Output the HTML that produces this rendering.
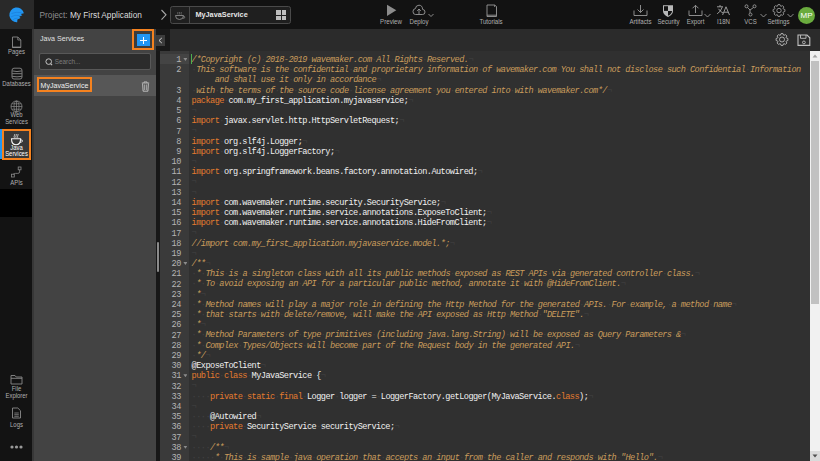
<!DOCTYPE html>
<html><head><meta charset="utf-8">
<style>
*{box-sizing:border-box;margin:0;padding:0}
html,body{width:820px;height:461px;overflow:hidden;background:#303030;font-family:"Liberation Sans",sans-serif}
.a{position:absolute}
#top{left:0;top:0;width:820px;height:29px;background:#121212}
#logo{left:0;top:0;width:34px;height:29px;background:#292929}
#nav{left:0;top:29px;width:32px;height:432px;background:#131313}
#navblack{left:0;top:189px;width:32px;height:28px;background:#000}
#panel{left:32px;top:29px;width:124px;height:432px;background:#434343;border-left:2px solid #373737}
#strip{left:156px;top:29px;width:4px;height:432px;background:#171717}
#strip2{left:156px;top:29px;width:14.4px;height:22px;background:#191919}
#etool{left:170.4px;top:29px;width:650px;height:22px;background:#2b2b2b}
#editor{left:160px;top:51px;width:650px;height:410px;background:#303030;overflow:hidden}
#gutter{left:0;top:0;width:29.4px;height:410px;background:#3a3a3a}
#sb{left:810px;top:51px;width:10px;height:410px;background:#f1f1f1}
.lbl{color:#b0b0b0;font-size:6.3px;transform:scaleX(0.94);white-space:nowrap;text-align:center}
.code{font-family:"Liberation Mono",monospace;font-size:8.6px;letter-spacing:-0.546px;line-height:10.2px;white-space:pre;color:#f0f0f0}
.c{color:#c99c5c;font-style:italic}
.k{color:#e37b2f}
.ln{position:absolute;left:0;margin-top:0.4px;width:20.8px;text-align:right;font-family:"Liberation Mono",monospace;font-size:8.6px;letter-spacing:-0.546px;line-height:10.2px;color:#b4b4b4}
.fold{position:absolute;left:23.4px;width:4px;height:3px;background:#8c8c8c;clip-path:polygon(0 0,100% 0,50% 100%)}
.i{color:#424242;font-style:normal}

</style></head><body>
<div id="top" class="a"></div>
<div id="logo" class="a">
<svg class="a" style="left:5.4px;top:3.6px" width="24" height="24" viewBox="0 0 24 24">
<path d="M18.9,9.3 A7.35,7.35 0 1 0 12.2,18.2 L12.4,15.4 L15.6,13.9 L14.2,12.8 L17.3,11.2 L15.8,9.9 Z" fill="#2196f3"/>
<path d="M6.5,9.5 Q11,7.6 16.5,8.6" stroke="#1976d2" stroke-width="0.7" fill="none" opacity="0.8"/>
<path d="M5.8,13 Q9.5,10.5 14.5,11.5" stroke="#1976d2" stroke-width="0.7" fill="none" opacity="0.8"/>
<path d="M7.5,16.5 Q9.5,13.8 12.8,14.2" stroke="#1976d2" stroke-width="0.7" fill="none" opacity="0.8"/>
</svg>
</div>
<div class="a" style="left:39.5px;top:9.6px;font-size:8.3px;line-height:10px;white-space:nowrap;color:#8f8f8f">Project: <span style="color:#dcdcdc">My First Application</span></div>
<svg class="a" style="left:160px;top:9px" width="8" height="12" viewBox="0 0 8 12"><path d="M1.5,1 L6,5.8 L1.5,10.6" stroke="#a8a8a8" stroke-width="1.1" fill="none"/></svg>
<div class="a" style="left:170px;top:6px;width:121px;height:18px;border:1px solid #4a4a4a;border-radius:2.5px;background:#1f1f1f"></div>
<div class="a" style="left:189px;top:7px;width:1px;height:16px;background:#4a4a4a"></div>
<svg class="a" style="left:174px;top:8px" width="12" height="14" viewBox="0 0 12 14">
<path d="M1.5,7.5 H9.5 Q9.5,11.5 5.5,11.5 Q1.5,11.5 1.5,7.5 Z" stroke="#8a8a8a" stroke-width="0.9" fill="none"/>
<path d="M9.4,8.3 Q11,8.3 10.8,9.5 Q10.4,10.4 9,10.2" stroke="#8a8a8a" stroke-width="0.8" fill="none"/>
<path d="M4,6.5 Q3.3,5.2 4,4 M5.7,6.5 Q5,5.2 5.7,4 M7.4,6.5 Q6.7,5.2 7.4,4" stroke="#8a8a8a" stroke-width="0.6" fill="none"/>
</svg>
<div class="a" style="left:195.4px;top:10px;font-size:7.3px;line-height:9px;font-weight:bold;color:#e6e6e6;white-space:nowrap">MyJavaService</div>
<div class="a" style="left:276px;top:10px;width:4.5px;height:4.5px;background:#bdbdbd"></div>
<div class="a" style="left:281.5px;top:10px;width:4.5px;height:4.5px;background:#bdbdbd"></div>
<div class="a" style="left:276px;top:15.5px;width:4.5px;height:4.5px;background:#bdbdbd"></div>
<div class="a" style="left:281.5px;top:15.5px;width:4.5px;height:4.5px;background:#bdbdbd"></div>

<!-- toolbar buttons -->
<svg class="a" style="left:386px;top:4px" width="11" height="13" viewBox="0 0 11 13"><path d="M1,0.7 L10.3,6.3 L1,12 Z" fill="#8c8c8c"/></svg>
<div class="a lbl" style="left:371px;top:17.8px;width:40px;font-size:6.8px;transform:scaleX(0.9)">Preview</div>
<svg class="a" style="left:412px;top:4px" width="14" height="12" viewBox="0 0 14 12"><path d="M3.5,10.5 H10.5 Q13,10.5 13,8 Q13,5.6 10.6,5.4 Q10.4,1.2 7,1.2 Q3.8,1.2 3.4,4.6 Q1,4.9 1,7.6 Q1,10.5 3.5,10.5 Z" stroke="#9a9a9a" stroke-width="0.9" fill="none"/><path d="M7,10 V5 M5.2,6.8 L7,5 L8.8,6.8" stroke="#9a9a9a" stroke-width="0.9" fill="none"/></svg>
<div class="a lbl" style="left:399px;top:17.8px;width:40px;font-size:6.8px;transform:scaleX(0.9)">Deploy</div>
<svg class="a" style="left:428px;top:13px" width="6" height="5" viewBox="0 0 6 5"><path d="M0.5,1 L3,3.5 L5.5,1" stroke="#9a9a9a" stroke-width="0.9" fill="none"/></svg>
<svg class="a" style="left:485px;top:3px" width="13" height="15" viewBox="0 0 13 15"><path d="M2,2 H9.5 L11.5,3.5 V13.5 H2 Z" stroke="#9a9a9a" stroke-width="0.9" fill="none"/><path d="M2,12.2 H11.5" stroke="#9a9a9a" stroke-width="0.9"/><path d="M9.5,2 V4" stroke="#9a9a9a" stroke-width="0.7"/></svg>
<div class="a lbl" style="left:471px;top:17.8px;width:40px;font-size:6.8px;transform:scaleX(0.9)">Tutorials</div>

<svg class="a" style="left:633px;top:4px" width="15" height="13" viewBox="0 0 15 13"><path d="M1,6.5 V11.5 H14 V6.5" stroke="#9a9a9a" stroke-width="0.9" fill="none"/><path d="M7.5,1 V8.3 M4.5,5.5 L7.5,8.5 L10.5,5.5" stroke="#9a9a9a" stroke-width="0.9" fill="none"/></svg>
<div class="a lbl" style="left:620px;top:17.8px;width:41px;font-size:6.8px;transform:scaleX(0.9)">Artifacts</div>
<svg class="a" style="left:662px;top:3.6px" width="12" height="14" viewBox="0 0 12 14"><path d="M1,1.2 H11 V7 Q11,10.6 6,13 Q1,10.6 1,7 Z" fill="#b8b8b8"/><path d="M2,2.2 H6 V6.9 H2 Z" fill="#121212"/><path d="M6,6.9 H10 Q9.8,10 6,11.8 Z" fill="#121212"/></svg>
<div class="a lbl" style="left:648px;top:17.8px;width:41px;font-size:6.8px;transform:scaleX(0.9)">Security</div>
<svg class="a" style="left:688px;top:4px" width="15" height="13" viewBox="0 0 15 13"><path d="M1,6.5 V11.5 H14 V6.5" stroke="#9a9a9a" stroke-width="0.9" fill="none"/><path d="M7.5,9 V1.3 M4.5,4.3 L7.5,1.3 L10.5,4.3" stroke="#9a9a9a" stroke-width="0.9" fill="none"/></svg>
<div class="a lbl" style="left:675px;top:17.8px;width:41px;font-size:6.8px;transform:scaleX(0.9)">Export</div>
<svg class="a" style="left:704px;top:13px" width="7" height="5" viewBox="0 0 7 5"><path d="M0.5,1 L3.5,4 L6.5,1" stroke="#9a9a9a" stroke-width="0.9" fill="none"/></svg>
<svg class="a" style="left:716px;top:4px" width="15" height="12" viewBox="0 0 15 12"><path d="M1,2.8 H7 M4,1 V2.8 M6.2,3.2 Q5,7.5 1.2,9.8 M2.5,4.8 Q4.5,8 7,9" stroke="#a8a8a8" stroke-width="0.9" fill="none"/><path d="M6.6,11 L10,2.8 L13.5,11 M8,8.2 H12.2" stroke="#a8a8a8" stroke-width="0.9" fill="none"/></svg>
<div class="a lbl" style="left:703px;top:17.8px;width:41px;font-size:6.8px;transform:scaleX(0.9)">I18N</div>
<svg class="a" style="left:744px;top:4px" width="13" height="13" viewBox="0 0 13 13"><circle cx="2.5" cy="2.3" r="1.5" stroke="#9a9a9a" stroke-width="0.9" fill="none"/><circle cx="10.5" cy="2.3" r="1.5" stroke="#9a9a9a" stroke-width="0.9" fill="none"/><circle cx="6.5" cy="10.5" r="1.5" stroke="#9a9a9a" stroke-width="0.9" fill="none"/><path d="M3.5,3.5 L6,6 L9.5,3.5 M6,6 V9" stroke="#9a9a9a" stroke-width="0.9" fill="none"/></svg>
<div class="a lbl" style="left:730px;top:17.8px;width:41px;font-size:6.8px;transform:scaleX(0.9)">VCS</div>
<svg class="a" style="left:760px;top:13px" width="7" height="5" viewBox="0 0 7 5"><path d="M0.5,1 L3.5,4 L6.5,1" stroke="#9a9a9a" stroke-width="0.9" fill="none"/></svg>
<svg class="a" style="left:772px;top:4px" width="14" height="13" viewBox="-7 -6.5 14 13"><path d="M-1.49,-4.35 L-0.99,-5.92 L0.99,-5.92 L1.49,-4.35 L2.02,-4.13 L3.49,-4.88 L4.88,-3.49 L4.13,-2.02 L4.35,-1.49 L5.92,-0.99 L5.92,0.99 L4.35,1.49 L4.13,2.02 L4.88,3.49 L3.49,4.88 L2.02,4.13 L1.49,4.35 L0.99,5.92 L-0.99,5.92 L-1.49,4.35 L-2.02,4.13 L-3.49,4.88 L-4.88,3.49 L-4.13,2.02 L-4.35,1.49 L-5.92,0.99 L-5.92,-0.99 L-4.35,-1.49 L-4.13,-2.02 L-4.88,-3.49 L-3.49,-4.88 L-2.02,-4.13 Z" stroke-linejoin="round" stroke="#9a9a9a" stroke-width="0.9" fill="none"/><circle cx="0" cy="0" r="2.2" stroke="#9a9a9a" stroke-width="0.9" fill="none"/></svg>
<div class="a lbl" style="left:758px;top:17.8px;width:41px;font-size:6.8px;transform:scaleX(0.9)">Settings</div>
<svg class="a" style="left:787px;top:13px" width="7" height="5" viewBox="0 0 7 5"><path d="M0.5,1 L3.5,4 L6.5,1" stroke="#9a9a9a" stroke-width="0.9" fill="none"/></svg>
<div class="a" style="left:798px;top:6.5px;width:17px;height:17px;border-radius:50%;background:#6aab3e;color:#fff;font-size:8px;text-align:center;line-height:17px">MP</div>

<!-- left nav -->
<div id="nav" class="a"></div>
<div id="navblack" class="a"></div>
<svg class="a" style="left:11px;top:36px" width="11" height="13" viewBox="0 0 11 13"><path d="M1.5,1 H6.8 L9.8,4 V11.5 H1.5 Z" stroke="#8a8a8a" stroke-width="0.9" fill="none"/><path d="M6.8,1 V4 H9.8" stroke="#8a8a8a" stroke-width="0.8" fill="none"/><path d="M1.5,11.3 H9.8" stroke="#8a8a8a" stroke-width="1.4"/></svg>
<div class="a lbl" style="left:0;top:48.1px;width:33px">Pages</div>
<svg class="a" style="left:11px;top:67px" width="12" height="13" viewBox="0 0 12 13"><path d="M3,1.2 H9 Q11,1.2 11,3.5 V10 Q11,12 9,12 H3 Q1,12 1,10 V3.5 Q1,1.2 3,1.2 Z" stroke="#8a8a8a" stroke-width="0.9" fill="none"/><path d="M1.2,3.9 Q6,5.2 10.8,3.9 M1.2,6.7 H10.8 M1.2,9.3 Q6,10.4 10.8,9.3" stroke="#8a8a8a" stroke-width="0.9" fill="none"/></svg>
<div class="a lbl" style="left:0;top:80px;width:33px">Databases</div>
<svg class="a" style="left:10px;top:100px" width="13" height="13" viewBox="0 0 13 13"><circle cx="6.5" cy="6.5" r="5.5" stroke="#8a8a8a" stroke-width="0.8" fill="none"/><ellipse cx="6.5" cy="6.5" rx="2.5" ry="5.5" stroke="#8a8a8a" stroke-width="0.7" fill="none"/><path d="M1,6.5 H12 M1.8,3.8 H11.2 M1.8,9.2 H11.2 M6.5,1 V12" stroke="#8a8a8a" stroke-width="0.7"/></svg>
<div class="a lbl" style="left:0;top:112.4px;width:33px;line-height:6.3px">Web<br>Services</div>
<div class="a" style="left:0;top:129px;width:2px;height:30px;background:#2196f3"></div>
<div class="a" style="left:2.4px;top:128.9px;width:28.9px;height:31.6px;border:2.2px solid #f5821f;background:#383838"></div>
<svg class="a" style="left:10px;top:132.6px" width="14" height="13" viewBox="0 0 14 13"><path d="M1.5,5.8 H10.6 Q10.6,11.8 6.05,11.8 Q1.5,11.8 1.5,5.8 Z" stroke="#f4f4f4" stroke-width="1.1" fill="none"/><path d="M10.5,6.8 Q12.8,6.6 12.4,8.3 Q12,9.4 10,9.3" stroke="#f4f4f4" stroke-width="0.9" fill="none"/><path d="M4.4,4.8 Q3.8,3.6 4.4,2.6 Q5,1.6 4.4,1 M6.1,4.8 Q5.5,3.6 6.1,2.6 Q6.7,1.6 6.1,1 M7.8,4.8 Q7.2,3.6 7.8,2.6 Q8.4,1.6 7.8,1" stroke="#f4f4f4" stroke-width="0.75" fill="none"/></svg>
<div class="a lbl" style="left:0;top:145.2px;width:33px;line-height:5.9px;color:#ffffff">Java<br>Services</div>
<svg class="a" style="left:10px;top:166px" width="13" height="12" viewBox="0 0 13 12"><rect x="8.2" y="1" width="2.8" height="2.8" stroke="#8a8a8a" stroke-width="0.8" fill="none"/><rect x="1.5" y="8.2" width="2.8" height="2.8" stroke="#8a8a8a" stroke-width="0.8" fill="none"/><path d="M9.6,3.8 V6 Q9.6,7.4 7.8,7.4 H5.5 Q4.2,7.4 3.2,8.2" stroke="#8a8a8a" stroke-width="0.8" fill="none"/></svg>
<div class="a lbl" style="left:0;top:178.9px;width:33px">APIs</div>
<svg class="a" style="left:10px;top:374px" width="13" height="11" viewBox="0 0 13 11"><path d="M1,1.5 H5 L6.2,3 H12 V10 H1 Z M1,4.3 H12" stroke="#8a8a8a" stroke-width="0.9" fill="none"/></svg>
<div class="a lbl" style="left:0;top:386.3px;width:33px;line-height:6.4px">File<br>Explorer</div>
<svg class="a" style="left:11px;top:407px" width="11" height="12" viewBox="0 0 11 12"><path d="M1.5,1 H6.8 L9.5,3.7 V11 H1.5 Z" stroke="#8a8a8a" stroke-width="0.9" fill="none"/><path d="M3.3,6 H7.8 M3.3,7.7 H7.8 M3.3,9.3 H7.8" stroke="#8a8a8a" stroke-width="0.8"/></svg>
<div class="a lbl" style="left:0;top:420.8px;width:33px">Logs</div>
<svg class="a" style="left:10px;top:444px" width="13" height="6" viewBox="0 0 13 6"><circle cx="2" cy="3" r="1.6" fill="#9a9a9a"/><circle cx="6.5" cy="3" r="1.6" fill="#9a9a9a"/><circle cx="11" cy="3" r="1.6" fill="#9a9a9a"/></svg>

<!-- panel -->
<div id="panel" class="a"></div>
<div class="a" style="left:40.1px;top:34.1px;font-size:7.8px;line-height:9px;color:#e0e0e0;white-space:nowrap;transform:scaleX(0.91);transform-origin:0 0">Java Services</div>
<div class="a" style="left:132px;top:29px;width:22px;height:21px;border:2px solid #f5821f;background:#3c3c3c"></div>
<div class="a" style="left:137px;top:34px;width:13px;height:12px;background:#2196f3"></div>
<div class="a" style="left:140px;top:39.5px;width:7px;height:1.2px;background:#fff"></div>
<div class="a" style="left:142.9px;top:36.6px;width:1.2px;height:7px;background:#fff"></div>
<div class="a" style="left:39px;top:53px;width:112.4px;height:17px;border:1px solid #585858;border-radius:2px;background:#2c2c2c"></div>
<svg class="a" style="left:44.6px;top:57.6px" width="8" height="8" viewBox="0 0 8 8"><circle cx="3.7" cy="3.6" r="2.8" stroke="#c4c4c4" stroke-width="1" fill="none"/><path d="M5.6,5.6 L7.1,7.1" stroke="#c4c4c4" stroke-width="1.1"/></svg>
<div class="a" style="left:54.7px;top:57.7px;font-size:6.4px;line-height:8px;color:#7c7c7c;white-space:nowrap">Search...</div>
<div class="a" style="left:34px;top:75px;width:122px;height:21px;background:#575757"></div>
<div class="a" style="left:36.5px;top:77px;width:55.5px;height:15.2px;border:2px solid #f5821f;background:#4a4a4a"></div>
<div class="a" style="left:40.6px;top:80.5px;font-size:7.05px;line-height:9px;color:#f0f0f0;white-space:nowrap">MyJavaService</div>
<svg class="a" style="left:141px;top:81px" width="9" height="11" viewBox="0 0 9 11"><path d="M0.8,2 H8.2 M3,2 V0.9 H6 V2" stroke="#c8c8c8" stroke-width="0.8" fill="none"/><path d="M1.6,2.5 L2.1,10.2 H6.9 L7.4,2.5" stroke="#c8c8c8" stroke-width="0.9" fill="none"/><path d="M3.6,3.5 V9 M5.4,3.5 V9" stroke="#c8c8c8" stroke-width="0.7"/></svg>

<div id="strip" class="a"></div>
<div class="a" style="left:156.5px;top:242px;width:2.5px;height:30px;background:#8a8a8a;border-radius:1px"></div>
<div id="etool" class="a"></div>
<div id="strip2" class="a"></div>
<div class="a" style="left:156px;top:35px;width:9px;height:10.6px;background:#3d3d3d"></div>
<svg class="a" style="left:157px;top:37px" width="7" height="7" viewBox="0 0 7 7"><path d="M4.8,1 L2,3.5 L4.8,6" stroke="#d8d8d8" stroke-width="1" fill="none"/></svg>
<svg class="a" style="left:774.8px;top:32.6px" width="14" height="13" viewBox="-7 -6.5 14 13"><path d="M-1.49,-4.35 L-0.99,-5.92 L0.99,-5.92 L1.49,-4.35 L2.02,-4.13 L3.49,-4.88 L4.88,-3.49 L4.13,-2.02 L4.35,-1.49 L5.92,-0.99 L5.92,0.99 L4.35,1.49 L4.13,2.02 L4.88,3.49 L3.49,4.88 L2.02,4.13 L1.49,4.35 L0.99,5.92 L-0.99,5.92 L-1.49,4.35 L-2.02,4.13 L-3.49,4.88 L-4.88,3.49 L-4.13,2.02 L-4.35,1.49 L-5.92,0.99 L-5.92,-0.99 L-4.35,-1.49 L-4.13,-2.02 L-4.88,-3.49 L-3.49,-4.88 L-2.02,-4.13 Z" stroke-linejoin="round" stroke="#b8b8b8" stroke-width="0.9" fill="none"/><circle cx="0" cy="0" r="2.5" stroke="#b8b8b8" stroke-width="0.9" fill="none"/></svg>
<svg class="a" style="left:796.5px;top:33.7px" width="14" height="13" viewBox="0 0 14 13"><path d="M1,1 H10 L12.8,3.8 V11.4 H1 Z" stroke="#c0c0c0" stroke-width="1.1" fill="none"/><path d="M3.5,1 V4.3 H9 V1" stroke="#c0c0c0" stroke-width="0.9" fill="none"/><circle cx="6.9" cy="8.4" r="1.4" stroke="#c0c0c0" stroke-width="0.9" fill="none"/></svg>

<div id="editor" class="a">
  <div id="gutter" class="a"></div>
  <div class="a" style="left:0;top:3px;width:29.4px;height:10px;background:#444"></div>
<div class="ln" style="top:3.90px">1</div>
<div class="fold" style="top:7.10px"></div>
<div class="code a" style="left:31.60px;top:3.90px"><span class="c">/*Copyright<span class="i">·</span>(c)<span class="i">·</span>2018-2019<span class="i">·</span>wavemaker.com<span class="i">·</span>All<span class="i">·</span>Rights<span class="i">·</span>Reserved.</span><span class="i">¬</span></div>
<div class="ln" style="top:14.10px">2</div>
<div class="code a" style="left:31.60px;top:14.10px"><span class="c"><span class="i">·</span>This<span class="i">·</span>software<span class="i">·</span>is<span class="i">·</span>the<span class="i">·</span>confidential<span class="i">·</span>and<span class="i">·</span>proprietary<span class="i">·</span>information<span class="i">·</span>of<span class="i">·</span>wavemaker.com<span class="i">·</span>You<span class="i">·</span>shall<span class="i">·</span>not<span class="i">·</span>disclose<span class="i">·</span>such<span class="i">·</span>Confidential<span class="i">·</span>Information</span></div>
<div class="code a" style="left:54.67px;top:24.30px"><span class="c">and<span class="i">·</span>shall<span class="i">·</span>use<span class="i">·</span>it<span class="i">·</span>only<span class="i">·</span>in<span class="i">·</span>accordance</span><span class="i">¬</span></div>
<div class="ln" style="top:34.50px">3</div>
<div class="code a" style="left:31.60px;top:34.50px"><span class="c"><span class="i">·</span>with<span class="i">·</span>the<span class="i">·</span>terms<span class="i">·</span>of<span class="i">·</span>the<span class="i">·</span>source<span class="i">·</span>code<span class="i">·</span>license<span class="i">·</span>agreement<span class="i">·</span>you<span class="i">·</span>entered<span class="i">·</span>into<span class="i">·</span>with<span class="i">·</span>wavemaker.com*/</span><span class="i">¬</span></div>
<div class="ln" style="top:44.70px">4</div>
<div class="code a" style="left:31.60px;top:44.70px"><span class="k">package</span><span class="i">·</span>com.my_first_application.myjavaservice;<span class="i">¬</span></div>
<div class="ln" style="top:54.90px">5</div>
<div class="code a" style="left:31.60px;top:54.90px"><span class="i">¬</span></div>
<div class="ln" style="top:65.10px">6</div>
<div class="code a" style="left:31.60px;top:65.10px"><span class="k">import</span><span class="i">·</span>javax.servlet.http.HttpServletRequest;<span class="i">¬</span></div>
<div class="ln" style="top:75.30px">7</div>
<div class="code a" style="left:31.60px;top:75.30px"><span class="i">¬</span></div>
<div class="ln" style="top:85.50px">8</div>
<div class="code a" style="left:31.60px;top:85.50px"><span class="k">import</span><span class="i">·</span>org.slf4j.Logger;<span class="i">¬</span></div>
<div class="ln" style="top:95.70px">9</div>
<div class="code a" style="left:31.60px;top:95.70px"><span class="k">import</span><span class="i">·</span>org.slf4j.LoggerFactory;<span class="i">¬</span></div>
<div class="ln" style="top:105.90px">10</div>
<div class="code a" style="left:31.60px;top:105.90px"><span class="i">¬</span></div>
<div class="ln" style="top:116.10px">11</div>
<div class="code a" style="left:31.60px;top:116.10px"><span class="k">import</span><span class="i">·</span>org.springframework.beans.factory.annotation.Autowired;<span class="i">¬</span></div>
<div class="ln" style="top:126.30px">12</div>
<div class="code a" style="left:31.60px;top:126.30px"><span class="i">¬</span></div>
<div class="ln" style="top:136.50px">13</div>
<div class="code a" style="left:31.60px;top:136.50px"><span class="i">¬</span></div>
<div class="ln" style="top:146.70px">14</div>
<div class="code a" style="left:31.60px;top:146.70px"><span class="k">import</span><span class="i">·</span>com.wavemaker.runtime.security.SecurityService;<span class="i">¬</span></div>
<div class="ln" style="top:156.90px">15</div>
<div class="code a" style="left:31.60px;top:156.90px"><span class="k">import</span><span class="i">·</span>com.wavemaker.runtime.service.annotations.ExposeToClient;<span class="i">¬</span></div>
<div class="ln" style="top:167.10px">16</div>
<div class="code a" style="left:31.60px;top:167.10px"><span class="k">import</span><span class="i">·</span>com.wavemaker.runtime.service.annotations.HideFromClient;<span class="i">¬</span></div>
<div class="ln" style="top:177.30px">17</div>
<div class="code a" style="left:31.60px;top:177.30px"><span class="i">¬</span></div>
<div class="ln" style="top:187.50px">18</div>
<div class="code a" style="left:31.60px;top:187.50px"><span class="c">//import<span class="i">·</span>com.my_first_application.myjavaservice.model.*;</span><span class="i">¬</span></div>
<div class="ln" style="top:197.70px">19</div>
<div class="code a" style="left:31.60px;top:197.70px"><span class="i">¬</span></div>
<div class="ln" style="top:207.90px">20</div>
<div class="fold" style="top:211.10px"></div>
<div class="code a" style="left:31.60px;top:207.90px"><span class="c">/**</span><span class="i">¬</span></div>
<div class="ln" style="top:218.10px">21</div>
<div class="code a" style="left:31.60px;top:218.10px"><span class="c"><span class="i">·</span>*<span class="i">·</span>This<span class="i">·</span>is<span class="i">·</span>a<span class="i">·</span>singleton<span class="i">·</span>class<span class="i">·</span>with<span class="i">·</span>all<span class="i">·</span>its<span class="i">·</span>public<span class="i">·</span>methods<span class="i">·</span>exposed<span class="i">·</span>as<span class="i">·</span>REST<span class="i">·</span>APIs<span class="i">·</span>via<span class="i">·</span>generated<span class="i">·</span>controller<span class="i">·</span>class.</span><span class="i">¬</span></div>
<div class="ln" style="top:228.30px">22</div>
<div class="code a" style="left:31.60px;top:228.30px"><span class="c"><span class="i">·</span>*<span class="i">·</span>To<span class="i">·</span>avoid<span class="i">·</span>exposing<span class="i">·</span>an<span class="i">·</span>API<span class="i">·</span>for<span class="i">·</span>a<span class="i">·</span>particular<span class="i">·</span>public<span class="i">·</span>method,<span class="i">·</span>annotate<span class="i">·</span>it<span class="i">·</span>with<span class="i">·</span>@HideFromClient.</span><span class="i">¬</span></div>
<div class="ln" style="top:238.50px">23</div>
<div class="code a" style="left:31.60px;top:238.50px"><span class="c"><span class="i">·</span>*</span><span class="i">¬</span></div>
<div class="ln" style="top:248.70px">24</div>
<div class="code a" style="left:31.60px;top:248.70px"><span class="c"><span class="i">·</span>*<span class="i">·</span>Method<span class="i">·</span>names<span class="i">·</span>will<span class="i">·</span>play<span class="i">·</span>a<span class="i">·</span>major<span class="i">·</span>role<span class="i">·</span>in<span class="i">·</span>defining<span class="i">·</span>the<span class="i">·</span>Http<span class="i">·</span>Method<span class="i">·</span>for<span class="i">·</span>the<span class="i">·</span>generated<span class="i">·</span>APIs.<span class="i">·</span>For<span class="i">·</span>example,<span class="i">·</span>a<span class="i">·</span>method<span class="i">·</span>name</span><span class="i">¬</span></div>
<div class="ln" style="top:258.90px">25</div>
<div class="code a" style="left:31.60px;top:258.90px"><span class="c"><span class="i">·</span>*<span class="i">·</span>that<span class="i">·</span>starts<span class="i">·</span>with<span class="i">·</span>delete/remove,<span class="i">·</span>will<span class="i">·</span>make<span class="i">·</span>the<span class="i">·</span>API<span class="i">·</span>exposed<span class="i">·</span>as<span class="i">·</span>Http<span class="i">·</span>Method<span class="i">·</span>&quot;DELETE&quot;.</span><span class="i">¬</span></div>
<div class="ln" style="top:269.10px">26</div>
<div class="code a" style="left:31.60px;top:269.10px"><span class="c"><span class="i">·</span>*</span><span class="i">¬</span></div>
<div class="ln" style="top:279.30px">27</div>
<div class="code a" style="left:31.60px;top:279.30px"><span class="c"><span class="i">·</span>*<span class="i">·</span>Method<span class="i">·</span>Parameters<span class="i">·</span>of<span class="i">·</span>type<span class="i">·</span>primitives<span class="i">·</span>(including<span class="i">·</span>java.lang.String)<span class="i">·</span>will<span class="i">·</span>be<span class="i">·</span>exposed<span class="i">·</span>as<span class="i">·</span>Query<span class="i">·</span>Parameters<span class="i">·</span>&amp;</span><span class="i">¬</span></div>
<div class="ln" style="top:289.50px">28</div>
<div class="code a" style="left:31.60px;top:289.50px"><span class="c"><span class="i">·</span>*<span class="i">·</span>Complex<span class="i">·</span>Types/Objects<span class="i">·</span>will<span class="i">·</span>become<span class="i">·</span>part<span class="i">·</span>of<span class="i">·</span>the<span class="i">·</span>Request<span class="i">·</span>body<span class="i">·</span>in<span class="i">·</span>the<span class="i">·</span>generated<span class="i">·</span>API.</span><span class="i">¬</span></div>
<div class="ln" style="top:299.70px">29</div>
<div class="code a" style="left:31.60px;top:299.70px"><span class="c"><span class="i">·</span>*/</span><span class="i">¬</span></div>
<div class="ln" style="top:309.90px">30</div>
<div class="code a" style="left:31.60px;top:309.90px">@ExposeToClient<span class="i">¬</span></div>
<div class="ln" style="top:320.10px">31</div>
<div class="fold" style="top:323.30px"></div>
<div class="code a" style="left:31.60px;top:320.10px"><span class="k">public</span><span class="i">·</span><span class="k">class</span><span class="i">·</span>MyJavaService<span class="i">·</span>{<span class="i">¬</span></div>
<div class="ln" style="top:330.30px">32</div>
<div class="code a" style="left:31.60px;top:330.30px"><span class="i">¬</span></div>
<div class="ln" style="top:340.50px">33</div>
<div class="code a" style="left:31.60px;top:340.50px"><span class="i">····</span><span class="k">private</span><span class="i">·</span><span class="k">static</span><span class="i">·</span><span class="k">final</span><span class="i">·</span>Logger<span class="i">·</span>logger<span class="i">·</span>=<span class="i">·</span>LoggerFactory.getLogger(MyJavaService.<span class="k">class</span>);<span class="i">¬</span></div>
<div class="ln" style="top:350.70px">34</div>
<div class="code a" style="left:31.60px;top:350.70px"><span class="i">¬</span></div>
<div class="ln" style="top:360.90px">35</div>
<div class="code a" style="left:31.60px;top:360.90px"><span class="i">····</span>@Autowired<span class="i">¬</span></div>
<div class="ln" style="top:371.10px">36</div>
<div class="code a" style="left:31.60px;top:371.10px"><span class="i">····</span><span class="k">private</span><span class="i">·</span>SecurityService<span class="i">·</span>securityService;<span class="i">¬</span></div>
<div class="ln" style="top:381.30px">37</div>
<div class="code a" style="left:31.60px;top:381.30px"><span class="i">¬</span></div>
<div class="ln" style="top:391.50px">38</div>
<div class="fold" style="top:394.70px"></div>
<div class="code a" style="left:31.60px;top:391.50px"><span class="i">····</span><span class="c">/**</span><span class="i">¬</span></div>
<div class="ln" style="top:401.70px">39</div>
<div class="code a" style="left:31.60px;top:401.70px"><span class="i">····</span><span class="c"><span class="i">·</span>*<span class="i">·</span>This<span class="i">·</span>is<span class="i">·</span>sample<span class="i">·</span>java<span class="i">·</span>operation<span class="i">·</span>that<span class="i">·</span>accepts<span class="i">·</span>an<span class="i">·</span>input<span class="i">·</span>from<span class="i">·</span>the<span class="i">·</span>caller<span class="i">·</span>and<span class="i">·</span>responds<span class="i">·</span>with<span class="i">·</span>&quot;Hello&quot;.</span><span class="i">¬</span></div>
  <div class="a" style="left:31.2px;top:3.4px;width:1px;height:9.6px;background:#4caf50"></div>
</div>
<div id="sb" class="a">
  <div class="a" style="left:1.3px;top:9.5px;width:7.5px;height:243px;background:#c1c1c1"></div>
  <svg class="a" style="left:2px;top:3px" width="6" height="4" viewBox="0 0 6 4"><path d="M0.5,3.5 L3,0.5 L5.5,3.5 Z" fill="#a3a3a3"/></svg>
  <div class="a" style="left:0;top:400px;width:10px;height:10px;background:#dadada"></div>
  <svg class="a" style="left:2px;top:403px" width="6" height="4" viewBox="0 0 6 4"><path d="M0.5,0.5 L3,3.5 L5.5,0.5 Z" fill="#505050"/></svg>
</div>

</body></html>
